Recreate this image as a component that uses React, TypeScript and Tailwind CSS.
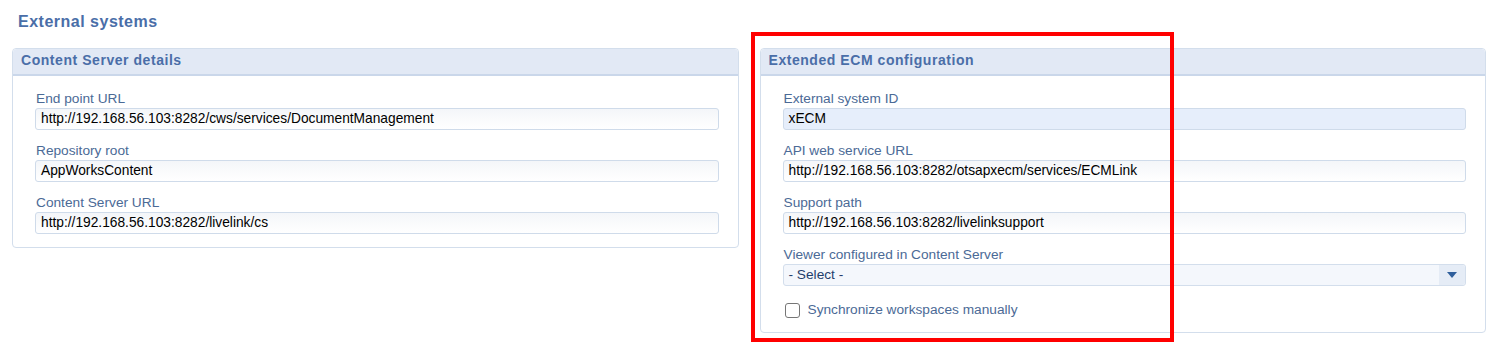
import React from 'react'

const FONT = "font-['Liberation_Sans',Arial,sans-serif]"

function Field({ label, value, readOnly }: { label: string; value: string; readOnly?: boolean }) {
  return (
    <div className="flex flex-col">
      <label className="h-[19px] text-[13.7px] leading-[19px] text-[#4b6a96] pl-[1px]">{label}</label>
      <div
        className={`h-[22px] rounded-[3px] border border-[#cfdbea] pl-[5px] text-[13.75px] leading-[20px] text-black ${
          readOnly ? 'bg-[#e6eefb]' : 'bg-gradient-to-b from-[#f4f6f9] to-white'
        }`}
      >
        {value}
      </div>
    </div>
  )
}

function Panel({ title, children }: { title: string; children: React.ReactNode }) {
  return (
    <div className="rounded-[4px] border border-[#d3deec] bg-white">
      <div className="h-[27px] rounded-t-[4px] border-b-2 border-[#cad7ea] bg-[#e2e9f5] pl-[8px] text-[14px] font-bold leading-[22px] tracking-[0.55px] text-[#4a6ea8]">
        {title}
      </div>
      <div className="flex flex-col gap-[11px] pl-[22px] pr-[19px] pt-[13px] pb-[13px]">{children}</div>
    </div>
  )
}

export default function App() {
  return (
    <div className={`relative h-[342px] w-[1502px] overflow-hidden bg-white ${FONT}`}>
      <div className="pl-3 pr-4 pt-[12px]">
        <h1 className="pl-[6px] text-[16px] font-bold leading-[20px] tracking-[0.5px] text-[#4a6ea8]">External systems</h1>
        <div className="mt-[16px] grid grid-cols-2 items-start gap-[21px]">
          <Panel title="Content Server details">
            <Field label="End point URL" value="http://192.168.56.103:8282/cws/services/DocumentManagement" />
            <Field label="Repository root" value="AppWorksContent" />
            <Field label="Content Server URL" value="http://192.168.56.103:8282/livelink/cs" />
          </Panel>
          <Panel title="Extended ECM configuration">
            <Field label="External system ID" value="xECM" readOnly />
            <Field label="API web service URL" value="http://192.168.56.103:8282/otsapxecm/services/ECMLink" />
            <Field label="Support path" value="http://192.168.56.103:8282/livelinksupport" />
            <div className="flex flex-col">
              <label className="h-[19px] text-[13.7px] leading-[19px] text-[#4b6a96] pl-[1px]">
                Viewer configured in Content Server
              </label>
              <div className="flex h-[22px] items-center justify-between rounded-[3px] border border-[#d3deec] bg-[#f4f7fc] pl-[5px] text-[13.7px] text-[#1f3e6c]">
                <span>- Select -</span>
                <span className="flex h-full w-[26px] items-center justify-center rounded-r-[3px] bg-[#e5ecf6]">
                  <svg width="10" height="6" viewBox="0 0 10 6">
                    <path d="M0 0h10L5 6z" fill="#2f5f9c" />
                  </svg>
                </span>
              </div>
            </div>
            <label className="mt-[5px] mb-[1px] flex items-center gap-[8px] pl-[2px] text-[13.7px] leading-[16px] text-[#4b6a96]">
              <span className="h-[15px] w-[15px] rounded-[3px] border border-[#767676] bg-white" />
              Synchronize workspaces manually
            </label>
          </Panel>
        </div>
      </div>
      <div className="absolute left-[751px] top-[32px] h-[310px] w-[423px] border-4 border-[#ff0000]" />
    </div>
  )
}
